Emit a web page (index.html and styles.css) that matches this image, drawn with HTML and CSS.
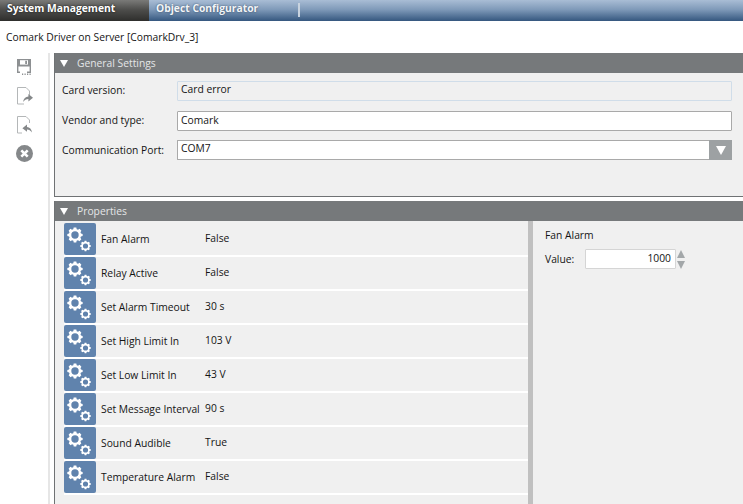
FILE: index.html
```html
<!DOCTYPE html>
<html lang="en">
<head>
<meta charset="utf-8">
<title>Comark Driver</title>
<link rel="stylesheet" href="styles.css">
</head>
<body>
<svg class="defs" width="0" height="0" aria-hidden="true">
  <defs>
    <g id="cog">
      <path fill="#fff" fill-rule="evenodd" d="M-2 -10H2L2.6 -7.4 4.6 -6.6 6.9 -8 9.7 -5.2 8.3 -2.9 9.1 -.9 11.6 -.3V3.1L9 3.7 8.2 5.7 9.6 8 6.8 10.8 4.5 9.4 2.5 10.2 1.9 12.7H-1.9L-2.5 10.2-4.5 9.4-6.8 10.8-9.6 8-8.2 5.7-9 3.7-11.6 3.1V-.3L-9.1 -.9-8.3 -2.9-9.7 -5.2-6.9 -8-4.6 -6.6-2.6 -7.4ZM0 -4.2A5.6 5.6 0 1 0 0 7 5.6 5.6 0 1 0 0 -4.2Z" transform="translate(0 -1.4)"/>
    </g>
    <g id="gears">
      <use href="#cog" transform="translate(11 12) scale(.66)"/>
      <use href="#cog" transform="translate(21.500 23) scale(.46)"/>
    </g>
  </defs>
</svg>
<nav class="tabs">
  <div class="tab tab-active">System Management</div>
  <div class="tab">Object Configurator</div>
  <div class="tab-sep"></div>
</nav>
<div class="title">Comark Driver on Server [ComarkDrv_3]</div>
<div class="main">
  <aside class="toolbar">
    <svg class="tool" width="18" height="18" viewBox="0 0 18 18">
      <path fill="#8d9092" d="M1 1H15V15H11V13.500H13.600V8.500H2.400V13.500H4V15H1Z"/>
      <path fill="#fff" d="M4 2.200H12V6.600H4Z"/>
      <path fill="#8d9092" d="M9.200 2.800H11V6H9.200Z"/>
      <path fill="#8d9092" d="M6 15.500H7.200V17H6ZM8.500 15.500H9.700V17H8.500ZM11 15.500H12.200V17H11ZM13.500 15.500H14.700V17H13.500Z"/>
    </svg>
    <svg class="tool" width="18" height="18" viewBox="0 0 18 18">
      <path fill="none" stroke="#b4b7b8" d="M1.500 17V.5H10L13.500 4V8M1.500 17H8"/>
      <path fill="#85888a" d="M7 15C7.600 11.500 9.600 9.600 12.400 9.400V7L17 10.800 12.400 14.400V12C10.200 12 8.600 13 7 15Z"/>
    </svg>
    <svg class="tool" width="18" height="18" viewBox="0 0 18 18">
      <path fill="none" stroke="#b4b7b8" d="M1.500 17V.5H10L13.500 4V7M1.500 17H6"/>
      <path fill="#85888a" d="M16 16.500C15.600 13 13.600 11.200 11 11V8.500L6.400 12.200 11 15.800V13.400C13 13.400 14.600 14.600 16 16.500Z"/>
    </svg>
    <svg class="tool" width="18" height="18" viewBox="0 0 18 18">
      <circle cx="8.500" cy="8.500" r="8.500" fill="#85888a"/>
      <path stroke="#fff" stroke-width="2.600" d="M5.300 5.300 11.700 11.700M11.700 5.300 5.300 11.700"/>
    </svg>
  </aside>
  <div class="content">
    <section class="panel panel-general">
      <header class="panel-head"><span class="arrow"></span>General Settings</header>
      <div class="form">
        <div class="field">
          <label class="label">Card version:</label>
          <div class="input input-readonly">Card error</div>
        </div>
        <div class="field">
          <label class="label">Vendor and type:</label>
          <div class="input">Comark</div>
        </div>
        <div class="field">
          <label class="label">Communication Port:</label>
          <div class="input input-select">
            <span class="select-text">COM7</span>
            <span class="select-btn"><span class="select-arrow"></span></span>
          </div>
        </div>
      </div>
    </section>
    <section class="panel panel-props">
      <header class="panel-head"><span class="arrow"></span>Properties</header>
      <div class="props">
        <div class="prop-list">
          <div class="prop"><span class="prop-icon"><svg width="34" height="34" viewBox="0 0 34 34"><use href="#gears"/></svg></span><span class="prop-name">Fan Alarm</span><span class="prop-value">False</span></div>
          <div class="prop"><span class="prop-icon"><svg width="34" height="34" viewBox="0 0 34 34"><use href="#gears"/></svg></span><span class="prop-name">Relay Active</span><span class="prop-value">False</span></div>
          <div class="prop"><span class="prop-icon"><svg width="34" height="34" viewBox="0 0 34 34"><use href="#gears"/></svg></span><span class="prop-name">Set Alarm Timeout</span><span class="prop-value">30 s</span></div>
          <div class="prop"><span class="prop-icon"><svg width="34" height="34" viewBox="0 0 34 34"><use href="#gears"/></svg></span><span class="prop-name">Set High Limit In</span><span class="prop-value">103 V</span></div>
          <div class="prop"><span class="prop-icon"><svg width="34" height="34" viewBox="0 0 34 34"><use href="#gears"/></svg></span><span class="prop-name">Set Low Limit In</span><span class="prop-value">43 V</span></div>
          <div class="prop"><span class="prop-icon"><svg width="34" height="34" viewBox="0 0 34 34"><use href="#gears"/></svg></span><span class="prop-name">Set Message Interval</span><span class="prop-value">90 s</span></div>
          <div class="prop"><span class="prop-icon"><svg width="34" height="34" viewBox="0 0 34 34"><use href="#gears"/></svg></span><span class="prop-name">Sound Audible</span><span class="prop-value">True</span></div>
          <div class="prop"><span class="prop-icon"><svg width="34" height="34" viewBox="0 0 34 34"><use href="#gears"/></svg></span><span class="prop-name">Temperature Alarm</span><span class="prop-value">False</span></div>
        </div>
        <div class="detail">
          <div class="detail-title">Fan Alarm</div>
          <div class="detail-row">
            <span class="detail-label">Value:</span>
            <div class="spin-input">1000</div>
            <div class="spin"><span class="spin-up"></span><span class="spin-down"></span></div>
          </div>
        </div>
      </div>
    </section>
  </div>
</div>
</body>
</html>
```
FILE: styles.css
```css
* { box-sizing: border-box; }
html, body { margin: 0; height: 100%; }
body {
  width: 743px;
  height: 504px;
  overflow: hidden;
  background: #fff;
  color: #141414;
  font: 10.3px/14px "Open Sans", "Noto Sans", sans-serif;
  display: flex;
  flex-direction: column;
}
.defs { position: absolute; }
.tabs {
  height: 21px;
  display: flex;
  align-items: stretch;
  background: linear-gradient(#a9bdd5, #7f9ab9 45%, #35577f);
  flex: none;
}
.tab {
  width: 149px;
  padding-left: 7px;
  font-weight: 700;
  line-height: 17px;
  color: #f2f5f8;
  text-shadow: 0 0 2px #33475f;
}
.tab-active {
  background: linear-gradient(#7a7a78, #4e4e4c 45%, #2e2e2c);
  color: #fff;
  text-shadow: 0 0 2px #111;
}
.tab-sep { width: 2px; margin: 3px 0 4px; background: #c8d3df; }
.title {
  flex: none;
  height: 32px;
  padding: 8px 0 0 6px;
  line-height: 16px;
}
.main { flex: 1; display: flex; min-height: 0; }
.toolbar {
  width: 50px;
  flex: none;
  border-right: 2px solid #e6e6e6;
  padding: 5px 0 0 16px;
  display: flex;
  flex-direction: column;
  gap: 11px;
}
.tool { display: block; }
.content {
  flex: 1;
  display: flex;
  flex-direction: column;
  gap: 4px;
  padding-left: 4px;
  min-width: 0;
}
.panel { background: #f0f0f0; border-left: 1px solid #6f7274; }
.panel-general { height: 144px; border-bottom: 1px solid #6f7274; flex: none; }
.panel-props { flex: 1; min-height: 0; display: flex; flex-direction: column; }
.panel-head {
  height: 20px;
  background: #76797b;
  color: #e4e6e7;
  display: flex;
  align-items: center;
  padding-bottom: 1px;
  flex: none;
}
.arrow {
  width: 0;
  height: 0;
  margin: 1px 9px 0 5px;
  border: 4px solid transparent;
  border-top: 7px solid #fff;
  border-bottom: 0;
}
.form {
  padding: 7px 11px 0 7px;
  display: flex;
  flex-direction: column;
  gap: 10px;
}
.field { display: flex; align-items: flex-start; height: 20px; }
.label { width: 115px; flex: none; margin-top: 3px; }
.input {
  flex: 1;
  height: 20px;
  margin-top: 1px;
  border: 1px solid #a9a9a9;
  border-radius: 1px;
  background: #fff;
  padding: 0 3px;
  line-height: 17px;
}
.input-readonly {
  background: #f0f0f0;
  border: 1px solid #d0dde9;
  line-height: 15px;
}
.input-select {
  display: flex;
  margin-top: 0;
  padding-right: 0;
  border-right: 0;
  line-height: 15px;
}
.select-text { flex: 1; }
.select-btn {
  width: 23px;
  margin: -1px 0;
  height: 20px;
  background: #9da1a3;
  display: flex;
  align-items: center;
  justify-content: center;
}
.select-arrow {
  width: 0;
  height: 0;
  border: 5px solid transparent;
  border-top: 9px solid #fff;
  border-bottom: 0;
}
.props { flex: 1; display: flex; min-height: 0; }
.prop-list {
  width: 478px;
  flex: none;
  padding: 2px 0 0 9px;
  border-right: 5px solid #c0c0c0;
  display: flex;
  flex-direction: column;
}
.prop {
  height: 34px;
  flex: none;
  display: flex;
  align-items: center;
  border-bottom: 2px solid #fff;
  background: #f0f0f0;
}
.prop-icon {
  width: 32px;
  height: 32px;
  flex: none;
  background: #6083ad;
  border-radius: 2px;
  overflow: hidden;
  display: block;
}
.prop-icon svg { display: block; }
.prop-name { width: 109px; flex: none; padding-left: 5px; }
.prop-value { margin-top: -2px; }
.detail { flex: 1; padding: 7px 0 0 12px; }
.detail-title { line-height: 14px; }
.detail-row { display: flex; align-items: center; margin-top: 7px; }
.detail-label { width: 40px; flex: none; }
.spin-input {
  width: 91px;
  height: 20px;
  background: #fff;
  border: 1px solid #d5d5d5;
  border-radius: 1px;
  text-align: right;
  padding-right: 4px;
  line-height: 16px;
}
.spin {
  display: flex;
  flex-direction: column;
  gap: 3px;
  margin-left: 1px;
}
.spin-up, .spin-down {
  width: 0;
  height: 0;
  border: 4px solid transparent;
}
.spin-up { border-bottom: 8px solid #a3a7a9; border-top: 0; }
.spin-down { border-top: 8px solid #a3a7a9; border-bottom: 0; }
```
